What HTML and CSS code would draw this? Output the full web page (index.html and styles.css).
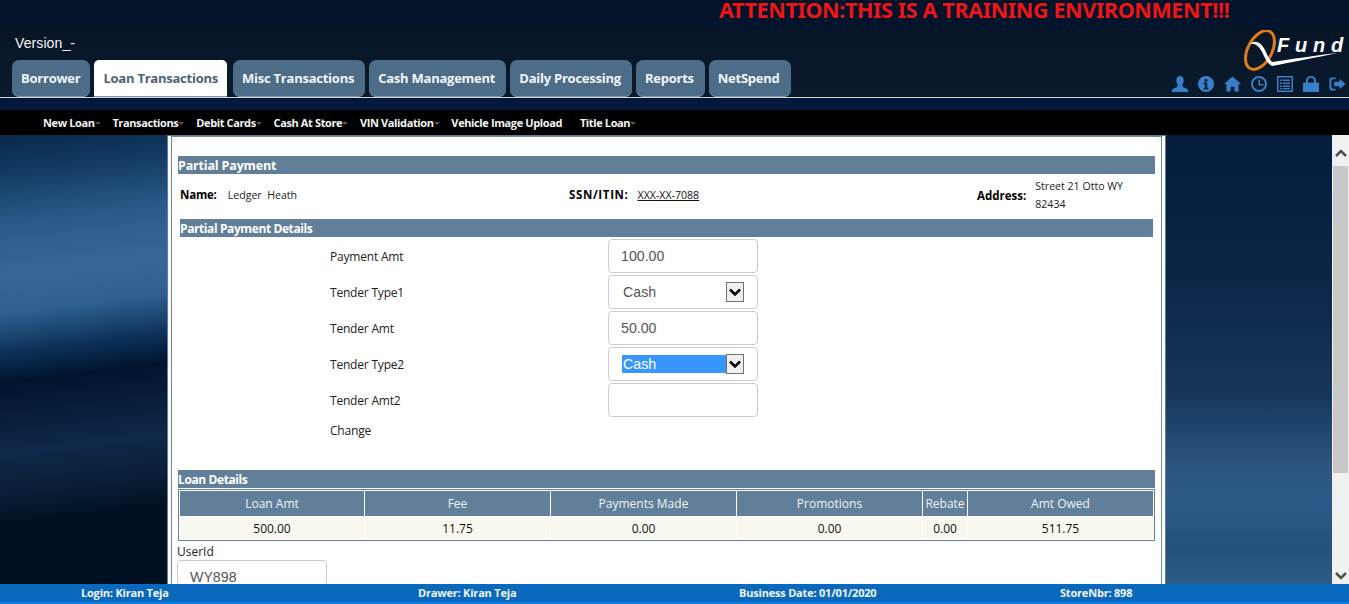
FILE: index.html
```html
<!DOCTYPE html>
<html lang="en">
<head>
<meta charset="utf-8">
<title>QFund</title>
<link rel="stylesheet" href="styles.css">
</head>
<body>
<header class="header">
  <div class="attention">ATTENTION:THIS IS A TRAINING ENVIRONMENT!!!</div>
  <div class="brand-row">
    <div class="version">Version_-</div>
    <svg class="logo" viewBox="0 0 106 44" width="106" height="44">
      <ellipse cx="22" cy="20" rx="12" ry="21" transform="rotate(28 22 20)" fill="none" stroke="#e47b17" stroke-width="3"/>
      <path d="M12 14 C18 9 24 13 28 22 C30 27 32 31 35 32 C55 29 80 25 100 23 C80 27 55 32 34 36 C29 33 27 28 24 22 C21 16 17 13 12 14Z" fill="#fff"/>
      <text x="39" y="22" class="logo-text">F</text>
      <text x="57" y="22" class="logo-text">u</text>
      <text x="75" y="22" class="logo-text">n</text>
      <text x="93" y="22" class="logo-text">d</text>
    </svg>
  </div>
  <div class="tab-row">
    <nav class="tabs">
      <a class="tab">Borrower</a>
      <a class="tab active">Loan Transactions</a>
      <a class="tab">Misc Transactions</a>
      <a class="tab">Cash Management</a>
      <a class="tab">Daily Processing</a>
      <a class="tab">Reports</a>
      <a class="tab">NetSpend</a>
    </nav>
    <div class="icons">
      <svg viewBox="0 0 16 16" width="16" height="16"><ellipse cx="8" cy="4.500" rx="3.600" ry="4.500"/><path d="M6 8h4l1 3 5 2.500V16H0v-2.500L5 11z"/></svg>
      <svg viewBox="0 0 16 16" width="16" height="16"><circle cx="8" cy="8" r="8"/><circle cx="8" cy="4.200" r="1.500" fill="#0b1f38"/><path d="M5.600 6.600h3.600v5.200h1.200v1.600H5.600v-1.600h1.200V8.200H5.600z" fill="#0b1f38"/></svg>
      <svg viewBox="0 0 18 16" width="17" height="16"><path d="M9 0l9 8h-2.500v8h-4.500v-5H7v5H2.500V8H0z"/></svg>
      <svg viewBox="0 0 16 16" width="16" height="16"><circle cx="8" cy="8" r="7" fill="none" stroke="#3a80c8" stroke-width="2"/><path d="M7.500 3.500h1.500v4.500h3.500v1.500h-5z"/></svg>
      <svg viewBox="0 0 16 16" width="16" height="16"><path fill-rule="evenodd" d="M0 0h16v16H0zM1.500 1.500v13h13v-13z"/><path d="M3 3.500h2v1.500H3zM6 3.500h7v1.500H6zM3 6.500h2V8H3zM6 6.500h7V8H6zM3 9.500h2V11H3zM6 9.500h7V11H6zM3 12h2v1.300H3zM6 12h7v1.300H6z"/></svg>
      <svg viewBox="0 0 16 16" width="16" height="16"><path fill-rule="evenodd" d="M0 6.500h3V4.500a5 4.500 0 0 1 10 0v2h3V16H0zM5 6.500h6V4.500a3 2.800 0 0 0-6 0z"/></svg>
      <svg viewBox="0 0 18 16" width="17" height="16"><path d="M7 1H3.500A3 3 0 0 0 .5 4v8a3 3 0 0 0 3 3H7v-2H4a1.500 1.500 0 0 1-1.500-1.500v-7A1.500 1.500 0 0 1 4 3h3z"/><path d="M11 2.500l6.500 5.500-6.500 5.500V10.500H5.500v-5H11z"/></svg>
    </div>
  </div>
</header>
<div class="header-strip"></div>
<nav class="submenu">
  <a class="sub">New Loan</a>
  <a class="sub">Transactions</a>
  <a class="sub">Debit Cards</a>
  <a class="sub">Cash At Store</a>
  <a class="sub">VIN Validation</a>
  <a class="sub plain">Vehicle Image Upload</a>
  <a class="sub">Title Loan</a>
</nav>
<main class="stage">
  <div class="canvas">
    <section class="panel">
      <div class="panel-inner">
        <h2 class="bar">Partial Payment</h2>
        <div class="customer">
          <div class="cust-name"><b>Name:</b><span>Ledger&nbsp; Heath</span></div>
          <div class="cust-ssn"><b>SSN/ITIN:</b><a>XXX-XX-7088</a></div>
          <div class="cust-addr"><b>Address:</b><span>Street 21 Otto WY<br>82434</span></div>
        </div>
        <h3 class="bar sub-bar">Partial Payment Details</h3>
        <div class="form">
          <label class="lbl">Payment Amt</label>
          <div class="field"><span class="val">100.00</span></div>
          <label class="lbl">Tender Type1</label>
          <div class="field sel"><span class="opt">Cash</span><span class="arrow"><svg viewBox="0 0 12 8" width="12" height="8"><path d="M1 1.500l5 5 5-5" fill="none" stroke="#000" stroke-width="2.500"/></svg></span></div>
          <label class="lbl">Tender Amt</label>
          <div class="field"><span class="val">50.00</span></div>
          <label class="lbl">Tender Type2</label>
          <div class="field sel"><span class="opt selected">Cash</span><span class="arrow"><svg viewBox="0 0 12 8" width="12" height="8"><path d="M1 1.500l5 5 5-5" fill="none" stroke="#000" stroke-width="2.500"/></svg></span></div>
          <label class="lbl">Tender Amt2</label>
          <div class="field"></div>
          <label class="lbl change">Change</label>
        </div>
        <h3 class="bar loan-bar">Loan Details</h3>
        <table class="loan">
          <thead>
            <tr><th class="c1">Loan Amt</th><th class="c2">Fee</th><th class="c3">Payments Made</th><th class="c4">Promotions</th><th class="c5">Rebate</th><th>Amt Owed</th></tr>
          </thead>
          <tbody>
            <tr><td>500.00</td><td>11.75</td><td>0.00</td><td>0.00</td><td>0.00</td><td>511.75</td></tr>
          </tbody>
        </table>
        <div class="user-label">UserId</div>
        <div class="field user"><span class="val">WY898</span></div>
      </div>
    </section>
  </div>
  <div class="scrollbar">
    <svg class="sb-up" viewBox="0 0 12 8" width="12" height="8"><path d="M1 7l5-5 5 5" fill="none" stroke="#505050" stroke-width="2.500"/></svg>
    <div class="sb-thumb"></div>
    <svg class="sb-down" viewBox="0 0 12 8" width="12" height="8"><path d="M1 1l5 5 5-5" fill="none" stroke="#505050" stroke-width="2.500"/></svg>
  </div>
</main>
<footer class="footer">
  <span class="f1">Login: Kiran Teja</span>
  <span class="f2">Drawer: Kiran Teja</span>
  <span class="f3">Business Date: 01/01/2020</span>
  <span class="f4">StoreNbr: 898</span>
</footer>
</body>
</html>
```
FILE: styles.css
```css
* { box-sizing: border-box; }
html, body { margin: 0; height: 100%; overflow: hidden; }
body {
  display: flex; flex-direction: column; height: 604px;
  font-family: "Open Sans", "Liberation Sans", sans-serif;
  font-size: 12px; color: #111; background: #04182f;
}
.header {
  height: 98px; flex: none; border-bottom: 1px solid #cfd8e0;
  background: linear-gradient(180deg, #021229 0, #03152d 28px, #071526 30px, #0a1a2e 100%);
}
.attention {
  height: 22px; padding-left: 719px; color: #f01515;
  font: 700 21.500px/20px "Noto Sans", "Liberation Sans", sans-serif; letter-spacing: -.35px; white-space: nowrap;
}
.brand-row { height: 38px; display: flex; justify-content: space-between; padding: 12px 5px 0 15px; position: relative; }
.version { color: #f4f6f8; font: 14px/18px "Liberation Sans", sans-serif; letter-spacing: .1px; }
.logo { position: absolute; right: 5px; top: 8px; }
.logo-text { fill: #fff; font: italic 700 20px "Liberation Sans", sans-serif; }
.tab-row { display: flex; justify-content: space-between; padding-left: 12px; }
.tabs { display: flex; gap: 4px; }
.tab {
  height: 37px; padding: 0 11px 0 9px; background: #4d6c87; color: #f2f5f8;
  font: 700 13px/36px "Open Sans", sans-serif; white-space: nowrap; letter-spacing: -.24px;
  border-radius: 7px; border-bottom: 1px solid #7e95a8;
}
.tab:first-child { padding-right: 10px; }
.tab.active { background: #fff; color: #4d6277; border-radius: 5px 5px 0 0; padding: 0 9px; margin-right: 2px; }
.icons { display: flex; gap: 10px; padding: 16px 3px 0 0; fill: #3a80c8; }
.header-strip { height: 12px; flex: none; background: #04183a; }
.submenu { height: 25px; flex: none; background: #000; display: flex; padding-left: 43px; gap: 17.800px; }
.sub { color: #f4f4f4; font: 700 11px/26px "Open Sans", sans-serif; white-space: nowrap; letter-spacing: -.38px; position: relative; }
.sub::after {
  content: ""; position: absolute; right: -6px; top: 12px; border: 3px solid transparent; border-top: 3px solid #555; border-bottom: 0;
}
.sub.plain::after { display: none; }
.stage { flex: 1; min-height: 0; display: flex; }
.canvas { flex: 1; min-width: 0; padding-left: 167px; overflow: hidden;
  background:
    linear-gradient(173deg, #0a2749 0, #123a62 8%, #2c5c8c 20%, #376795 30%, #2f6090 38%, #0b2f56 47%, #00142d 53%, #0a2040 62%, #10284a 68%, #0a2038 76%, #000f22 84%, #001022 100%) 0 0 / 167px 100% no-repeat,
    linear-gradient(180deg, #051d3c 0, #0a2546 30%, #16375c 58%, #2c5680 74%, #2c5a88 82%, #26517d 92%, #2b5b89 100%);
}
.panel { width: 999px; height: 100%; border: 1px solid #5f7d96; border-bottom: 0; background: #fff; padding: 0 3px; }
.panel-inner {
  height: 100%; border: 1px solid #6f8aa0; border-bottom: 0; padding: 19px 6px 0; overflow: hidden;
  background:
    linear-gradient(#f3f5e6, #f3f5e6) 0 0 / 5px 5px no-repeat,
    linear-gradient(#f3f5e6, #f3f5e6) 100% 0 / 5px 5px no-repeat,
    #fff;
}
.bar { margin: 0; background: #617f98; color: #fff; font: 700 12.500px/19px "Open Sans", sans-serif; height: 18px; letter-spacing: -.17px; white-space: nowrap; }
.customer { display: grid; grid-template-columns: 389px 408px 1fr; height: 45px; padding-left: 2px; align-items: start; }
.customer b { font-size: 11.500px; color: #000; letter-spacing: -.2px; }
.customer span, .customer a { font-size: 10.600px; color: #222; }
.cust-name, .cust-ssn, .cust-addr { display: flex; gap: 11px; line-height: 18px; padding-top: 12px; }
.cust-ssn { gap: 9px; }
.cust-ssn b { letter-spacing: .65px; }
.cust-ssn a { color: #111; text-decoration: underline; }
.cust-addr { gap: 9px; padding-top: 3px; }
.cust-addr b { padding-top: 10px; letter-spacing: 0; }
.sub-bar { margin: 0 2px; }
.sub-bar, .loan-bar { font-size: 12px; letter-spacing: -.4px; }
.form { display: grid; grid-template-columns: 278px 150px; grid-auto-rows: 36px; padding: 1px 0 0 152px; height: 233px; align-items: center; }
.lbl { font-size: 12px; color: #222; grid-column: 1; letter-spacing: -.2px; }
.field {
  height: 34px; width: 150px; border: 1px solid #ccc; border-radius: 4px; background: #fff;
  display: flex; align-items: center; font: 14.200px "Liberation Sans", sans-serif; color: #555; padding-left: 12px;
}
.sel { padding: 0 13px; }
.opt { padding-left: 1px; flex: 1; line-height: 18px; }
.opt.selected { background: #3797fe; color: #fff; }
.arrow { width: 18px; height: 20px; border: 1px solid #707070; background: #f0f0f0; display: flex; align-items: center; justify-content: center; }
.change { padding-bottom: 11px; }
.loan { width: 100%; border: 1px solid #617f98; border-spacing: 1px; border-collapse: separate; margin-top: 1px; table-layout: fixed; font-size: 12px; }
.loan th { background: #617f98; color: #eef2f5; font-weight: 400; height: 25px; padding: 0; }
.loan td { background: #f8f7f0; text-align: center; color: #111; height: 22px; padding: 1px 0 0; }
.c1 { width: 184px; }
.c2, .c3, .c4 { width: 185px; }
.c5 { width: 44px; }
.user-label { margin: 3px 0 0 -1px; height: 16px; line-height: 16px; font-size: 12px; color: #222; }
.user { margin: 0 0 0 -1px; }
.scrollbar { width: 17px; flex: none; background: #f0f0f0; display: flex; flex-direction: column; align-items: center; position: relative; }
.sb-up { margin: 14px 0 9px; flex: none; }
.sb-thumb { width: 15px; height: 307px; background: #c8c8c8; }
.sb-down { position: absolute; bottom: 4px; }
.footer { height: 20px; flex: none; background: #0a68bd; border-bottom: 2px solid #0a7ce6; color: #f2f6fa; font: 700 11px/18px "Open Sans", sans-serif; letter-spacing: -.2px; display: grid; grid-template-columns: 337px 321px 321px 1fr; padding-left: 81px; white-space: nowrap; }
```
